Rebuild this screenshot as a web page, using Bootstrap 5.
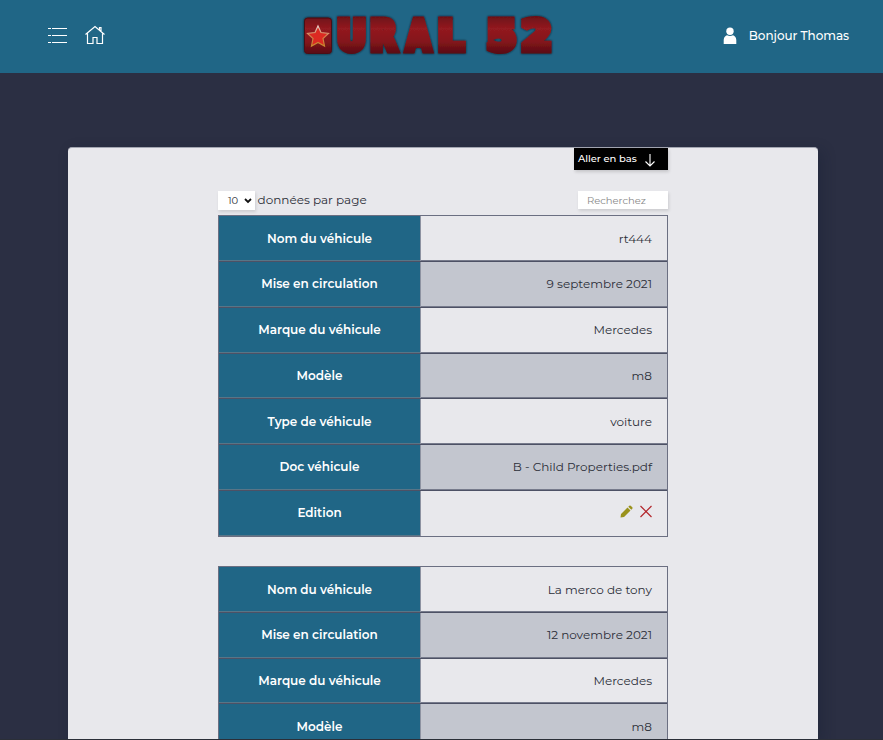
<!DOCTYPE html>
<html lang="fr">
<head>
<meta charset="utf-8">
<meta name="viewport" content="width=device-width, initial-scale=1">
<title>Oural 52</title>
<link href="https://cdn.jsdelivr.net/npm/bootstrap@5.3.0/dist/css/bootstrap.min.css" rel="stylesheet">
<style>
  body { background: #2b2f43; font-family: Montserrat, Inter, sans-serif; font-size: 12px; color: #2b2e38; height: 740px; overflow: hidden; border-bottom: 1px solid #2b2f38; }
  .topbar { height: 73px; background: #206686; padding: 0 34px 0 47px; }
  .side { width: 200px; padding-bottom: 2px; }
  .side-nav { padding-bottom: 3px; }
  .user-name { font-weight: 500; letter-spacing: -.05px; }
  .logo { margin-left: -41px; }
  .panel { width: 750px; height: 592px; margin: 74px 0 0 68px; background: #e8e8ec; border-top: 1px solid #a3a6b1; border-radius: 4px 4px 0 0; box-shadow: 4px 4px 14px rgba(15,25,45,.3); }
  .inner { width: 450px; margin-left: 150px; }
  .go-down { width: 94px; height: 22px; font-size: 10px; font-weight: 500; letter-spacing: -.05px; padding: 0 12px 1px 4px; box-shadow: 1px 2px 3px rgba(0,0,0,.15); }
  .go-down svg { margin-top: 3px; }
  .tools { height: 19px; margin-top: 21px; }
  .per-page { width: 37px; height: 19px; font-size: 10px; padding: 0 3px 0 10px; box-shadow: 1px 2px 3px rgba(0,0,0,.12); }
  .per-label { margin-left: 2.5px; }
  .search { width: 90px; height: 18px; font-size: 10px; padding: 0 9px; border: 0; border-radius: 0; background: #fff; outline: 0; box-shadow: 1px 2px 3px rgba(0,0,0,.12); }
  .search::placeholder { color: #888; opacity: 1; }
  .record { border: 1px solid #6b6f82; margin-top: 5.4px; }
  .record + .record { margin-top: 29.8px; }
  .line { height: 45.72px; border-bottom: 1px solid #4d5165; box-shadow: inset 0 -1px #777b8c; }
  .line:nth-child(7) { height: 44.8px; border-bottom: 0; box-shadow: none; }
  .line:nth-child(even) { background: #c3c6cf; }
  .key { width: 202px; background: #206686; color: #fff; font-weight: 600; border-right: 1px solid #8d92a1; box-shadow: inset 0 -1px #587587; }
  .val { padding-right: 15px; }
  .icons { padding-bottom: 3px; }
  .icon-cut { margin-left: 7px; }
</style>
<script src="https://cdn.jsdelivr.net/npm/bootstrap@5.3.0/dist/js/bootstrap.bundle.min.js"></script>
</head>
<body>
<header class="topbar d-flex align-items-center justify-content-between text-white">
  <nav class="side side-nav d-flex align-items-center">
    <svg width="21" height="18" fill="none" stroke="#fff" stroke-width="1.1"><path d="M1 2.500h3M5 2.500h15M1 9.500h3M5 9.500h15M1 16.500h3M5 16.500h15"/></svg>
    <svg class="ms-3" width="22" height="20" fill="none" stroke="#fff" stroke-width="1.2"><path d="M1.500 9.500 11 1.500l9.500 8M3.500 8.500v10h5.500v-6h4v6h5.500v-10M15.500 5V2.500h1.500v4"/></svg>
  </nav>
  <svg class="logo" width="258" height="72" viewBox="299 0 258 72" role="img">
    <defs>
      <linearGradient id="red" gradientUnits="userSpaceOnUse" x1="0" x2="0" y1="16" y2="54"><stop stop-color="#6e1118"/><stop offset=".3" stop-color="#931a20"/><stop offset=".65" stop-color="#84151b"/><stop offset="1" stop-color="#520b11"/></linearGradient>
      <linearGradient id="rim" x1="0" x2="0" y1="0" y2="1"><stop stop-color="#e8cfcb"/><stop offset=".5" stop-color="#cf7d4a"/><stop offset="1" stop-color="#c98a2e"/></linearGradient>
      <filter id="glow" x="-10%" y="-20%" width="120%" height="140%"><feDropShadow dx="0" dy="0" stdDeviation="1.3" flood-color="#10171e" flood-opacity=".95"/></filter>
    </defs>
    <g filter="url(#glow)" fill="url(#red)">
      <rect x="304.500" y="17" width="27" height="35.500" rx="3" stroke="#4c0e14"/>
      <g font-family="DejaVu Sans, sans-serif" font-weight="700" font-size="40" stroke="url(#red)" stroke-width="7" stroke-linejoin="miter" stroke-miterlimit="2">
        <text x="337" y="49" textLength="29" lengthAdjust="spacingAndGlyphs">U</text>
        <text x="370.300" y="49" textLength="26.500" lengthAdjust="spacingAndGlyphs">R</text>
        <text x="406.500" y="49" textLength="24" lengthAdjust="spacingAndGlyphs">A</text>
        <text x="438" y="49" textLength="25.500" lengthAdjust="spacingAndGlyphs">L</text>
        <text x="487" y="49" textLength="29" lengthAdjust="spacingAndGlyphs">5</text>
        <text x="521.500" y="49" textLength="30" lengthAdjust="spacingAndGlyphs">2</text>
      </g>
    </g>
    <path d="m318 25 3 6.500 7.500 1-5.500 5 1.500 7.500-6.500-3.500-6.500 3.500 1.500-7.500-5.500-5 7.500-1z" fill="#dc2a22" stroke="url(#rim)" stroke-width="1.200"/>
  </svg>
  <div class="side d-flex align-items-center justify-content-end">
    <svg width="14" height="18" fill="#fff"><circle cx="7" cy="4.300" r="3.700"/><path d="M.7 17v-4c0-3 2-4.300 3.300-4.800q3 1.500 6 0c1.300.5 3.300 1.800 3.300 4.800v4z"/></svg>
    <span class="user-name ms-2 ps-1">Bonjour Thomas</span>
  </div>
</header>
<main class="panel">
  <div class="inner">
    <div class="go-down ms-auto bg-black text-white d-flex align-items-center justify-content-between"><span>Aller en bas</span><svg width="12" height="14" fill="none" stroke="#fff" stroke-width="1.100"><path d="M6 1v12M1.500 8.500 6 13l4.500-4.500"/></svg></div>
    <div class="tools d-flex align-items-start">
      <div class="per-page bg-white d-flex align-items-center justify-content-between"><span>10</span><svg width="8" height="6" fill="none" stroke="#111" stroke-width="1.800"><path d="m1 1 3 3 3-3"/></svg></div>
      <span class="per-label">données par page</span>
      <input class="search ms-auto" placeholder="Recherchez">
    </div>
    <div class="record">
      <div class="line d-flex"><div class="key d-flex align-items-center justify-content-center">Nom du véhicule</div><div class="val flex-fill d-flex align-items-center justify-content-end">rt444</div></div>
      <div class="line d-flex"><div class="key d-flex align-items-center justify-content-center">Mise en circulation</div><div class="val flex-fill d-flex align-items-center justify-content-end">9 septembre 2021</div></div>
      <div class="line d-flex"><div class="key d-flex align-items-center justify-content-center">Marque du véhicule</div><div class="val flex-fill d-flex align-items-center justify-content-end">Mercedes</div></div>
      <div class="line d-flex"><div class="key d-flex align-items-center justify-content-center">Modèle</div><div class="val flex-fill d-flex align-items-center justify-content-end">m8</div></div>
      <div class="line d-flex"><div class="key d-flex align-items-center justify-content-center">Type de véhicule</div><div class="val flex-fill d-flex align-items-center justify-content-end">voiture</div></div>
      <div class="line d-flex"><div class="key d-flex align-items-center justify-content-center">Doc véhicule</div><div class="val flex-fill d-flex align-items-center justify-content-end">B - Child Properties.pdf</div></div>
      <div class="line d-flex"><div class="key d-flex align-items-center justify-content-center">Edition</div><div class="val icons flex-fill d-flex align-items-center justify-content-end">
        <svg width="13" height="13" fill="#9a921c"><path d="m1 9 6.500-6.500 3 3L4 12l-3.500.5zM8.300 1.700l1-1q.7-.5 1.400 0l1.600 1.600q.5.700 0 1.400l-1 1z"/></svg>
        <svg class="icon-cut" width="12" height="13" fill="none" stroke="#b3262c" stroke-width="1.200"><path d="m.5 1 11 11M11.500 1l-11 11"/></svg>
      </div></div>
    </div>
    <div class="record">
      <div class="line d-flex"><div class="key d-flex align-items-center justify-content-center">Nom du véhicule</div><div class="val flex-fill d-flex align-items-center justify-content-end">La merco de tony</div></div>
      <div class="line d-flex"><div class="key d-flex align-items-center justify-content-center">Mise en circulation</div><div class="val flex-fill d-flex align-items-center justify-content-end">12 novembre 2021</div></div>
      <div class="line d-flex"><div class="key d-flex align-items-center justify-content-center">Marque du véhicule</div><div class="val flex-fill d-flex align-items-center justify-content-end">Mercedes</div></div>
      <div class="line d-flex"><div class="key d-flex align-items-center justify-content-center">Modèle</div><div class="val flex-fill d-flex align-items-center justify-content-end">m8</div></div>
    </div>
  </div>
</main>
</body>
</html>
